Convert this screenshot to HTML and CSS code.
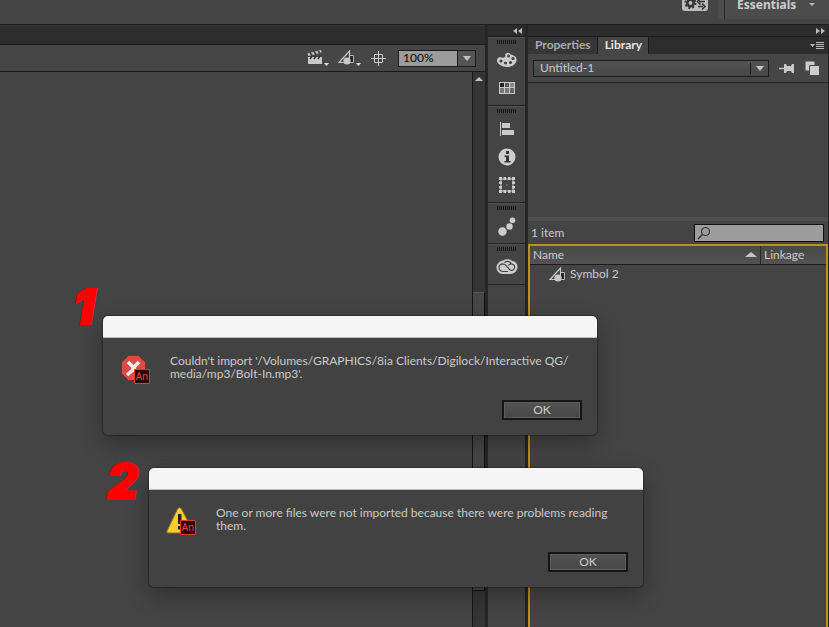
FILE: index.html
```html
<!DOCTYPE html>
<html lang="en">
<head>
<meta charset="utf-8">
<title>Animate workspace</title>
<link rel="stylesheet" href="styles.css">
</head>
<body>
<svg class="defs" aria-hidden="true">
  <symbol id="symbol-icon" viewBox="0 0 17 15">
    <path d="M9 5.500h6.500v7H9z" fill="#242424" stroke="#b8b8b8"/>
    <path d="M1 12.500L11.500 1v11.500z" fill="#444" stroke="#c8c8c8" stroke-width="1.200"/>
    <circle cx="9" cy="11" r="3.600" fill="#c8c8c8"/>
  </symbol>
</svg>
<div class="app">
  <header class="appbar">
    <button class="sync" aria-label="Sync settings">
      <svg width="26" height="16" viewBox="0 0 26 16"><circle cx="8.500" cy="8" r="3.200" fill="none" stroke="#333" stroke-width="2.600"/><circle cx="8.500" cy="8" r="5" fill="none" stroke="#333" stroke-width="2" stroke-dasharray="2 1.930"/><path d="M23 6.500h-6M18.500 3.500l-3 3 3 3M16 11.500h5M20 8.500l3 3-3 3" fill="none" stroke="#333" stroke-width="1.600"/></svg>
    </button>
    <button class="workspace">Essentials <span class="caret"></span></button>
  </header>
  <main class="workarea">
    <section class="stage">
      <div class="doc-tabs"></div>
      <div class="editbar">
        <button class="tool" aria-label="Edit scene">
          <svg width="23" height="18" viewBox="0 0 23 18"><path d="M2 9h14v6H2z" fill="#c8c8c8"/><path d="M1.500 4.500L15 1l.6 2.500L2.200 7z" fill="#c8c8c8"/><path d="M4 4l2 2M8 3l2 2M12 2l2 2" stroke="#333" stroke-width="1.700"/><path d="M2 8.500h14" stroke="#c8c8c8"/><path d="M4 10l2-3M8 10l2-3M12 10l2-3" stroke="#333" stroke-width="1.500"/><path d="M18 14h5l-2.500 3z" fill="#ddd"/></svg>
        </button>
        <button class="tool" aria-label="Edit symbols">
          <svg width="24" height="18" viewBox="0 0 24 18"><use href="#symbol-icon" y="1" width="17" height="15"/><path d="M18 14h5l-2.500 3z" fill="#ddd"/></svg>
        </button>
        <button class="tool" aria-label="Center stage">
          <svg width="15" height="15" viewBox="0 0 15 15"><path d="M3.500 3.500h8v8h-8zM7.500 0v15M0 7.500h15" fill="none" stroke="#c8c8c8"/></svg>
        </button>
        <div class="zoom"><input type="text" value="100%" aria-label="Zoom"><button aria-label="Zoom levels"><span class="arrow-down"></span></button></div>
      </div>
      <div class="canvas">
        <div class="scrollbar"><span class="scroll-up"></span><span class="thumb"></span></div>
      </div>
    </section>
    <nav class="dock" aria-label="Collapsed panels">
      <div class="dock-head">
        <svg width="9" height="6" viewBox="0 0 9 6"><path d="M4 0v6L0 3zM9 0v6L5 3z" fill="#bbb"/></svg>
      </div>
      <div class="dock-group">
        <button aria-label="Color"><svg width="20" height="16" viewBox="0 0 20 16"><path d="M9 1.500C11 0 13 1 13.500 2.500c4 .5 6.500 3 6 6-.5 4-4.500 6.500-9.500 6.500S0 12 0 8.500c0-2 1-3 3-3.200 2 .2 4 1 5-.3 1-1.500-.5-2.500 1-3.500z" fill="#cdcdcd"/><g fill="#444"><circle cx="4" cy="9" r="1.600"/><circle cx="8.500" cy="11" r="1.600"/><circle cx="13.500" cy="10.500" r="1.600"/><circle cx="16" cy="6.500" r="1.600"/><circle cx="11.500" cy="4" r="1.500"/></g></svg></button>
        <button aria-label="Swatches"><svg width="16" height="12" viewBox="0 0 16 12"><path d="M0 0h16v12H0z" fill="#c9c9c9"/><path d="M1 1h4v4H1z" fill="#222"/><path d="M6 1h4v4H6z" fill="#555"/><path d="M11 1h4v4h-4z" fill="#888"/><path d="M1 6h4v5H1zM6 6h4v5H6z" fill="#777"/><path d="M11 6h4v5h-4z" fill="#666"/></svg></button>
      </div>
      <div class="dock-group">
        <button aria-label="Align"><svg width="16" height="16" viewBox="0 0 16 16"><path d="M1.500 1v14" stroke="#c9c9c9"/><path d="M3 2h8v5H3zM3 9h12v5H3z" fill="#c9c9c9"/></svg></button>
        <button aria-label="Info"><svg width="18" height="18" viewBox="0 0 18 18"><circle cx="9" cy="9" r="8.500" fill="#cdcdcd"/><path d="M8 3h3v3H8zM6.500 7.500H11V13h1.500v1.500h-6V13H8V9H6.500z" fill="#333"/></svg></button>
        <button aria-label="Transform"><svg width="16" height="16" viewBox="0 0 16 16"><path d="M2 2h12v12H2z" fill="none" stroke="#c9c9c9"/><path d="M0 0h3v3H0zM4.500 0h2.500v3H4.500zM9 0h2.500v3H9zM13 0h3v3h-3zM0 13h3v3H0zM4.500 13h2.500v3H4.500zM9 13h2.500v3H9zM13 13h3v3h-3zM0 4.500h3V7H0zM0 9h3v2.500H0zM13 4.500h3V7h-3zM13 9h3v2.500h-3z" fill="#cdcdcd"/><path d="M3 3h10v10H3z" fill="#444"/><path d="M7.500 7.500h1v1h-1z" fill="#cdcdcd"/></svg></button>
      </div>
      <div class="dock-group">
        <button aria-label="Motion presets"><svg width="18" height="19" viewBox="0 0 18 19"><g fill="#cdcdcd"><circle cx="4.500" cy="14.500" r="4.200"/><circle cx="11.500" cy="9.500" r="3.200"/><circle cx="14.500" cy="3.300" r="2.800"/></g></svg></button>
      </div>
      <div class="dock-group">
        <button aria-label="Creative Cloud libraries"><svg width="22" height="16" viewBox="0 0 22 16"><path d="M7 1.500C10-.5 14-.2 16 2c3.500 0 5.500 3 5.500 6s-2.500 7-7 7H7c-4 0-6.500-3-6.500-6.500S3.500 2 7 1.500z" fill="#cdcdcd"/><path d="M12 12.500H7.200C2 12.500 1.500 5 6.800 4.800c2 0 3 1.200 4 2.500l3 3.500c3.500 2.500 6.500-3 3.500-5.200-2-1.300-3.800-.6-4.800.7M8.500 3.500c3-2 5.500-.5 6.800 1" fill="none" stroke="#444" stroke-width="1.200"/></svg></button>
      </div>
    </nav>
    <aside class="panel">
      <div class="panel-head"><svg width="9" height="6" viewBox="0 0 9 6"><path d="M0 0v6l4-3zM5 0v6l4-3z" fill="#bbb"/></svg></div>
      <div class="panel-tabs">
        <button>Properties</button><button class="active">Library</button>
        <svg class="menu" width="14" height="9" viewBox="0 0 14 9"><path d="M0 3h5L2.500 6z" fill="#bbb"/><path d="M6 1.500h8M6 3.500h8M6 5.500h8M6 7.500h8" stroke="#bbb"/></svg>
      </div>
      <div class="document">
        <button class="doc-select"><span>Untitled-1</span><span class="drop"><span class="arrow-down"></span></span></button>
        <button class="tool" aria-label="Pin current library"><svg width="16" height="11" viewBox="0 0 16 11"><path d="M0 5.500h7" stroke="#c9c9c9" stroke-width="1.400"/><path d="M5 1h2l1 2h4l1-2h2v9h-2l-1-2H8l-1 2H5z" fill="#c9c9c9"/></svg></button>
        <button class="tool" aria-label="New library panel"><svg width="15" height="15" viewBox="0 0 15 15"><path d="M.5.5h9v9h-9z" fill="#ccc"/><path d="M4.500 4.500h10v10h-10z" fill="#ccc" stroke="#444"/></svg></button>
      </div>
      <div class="preview"></div>
      <div class="search-row"><span>1 item</span>
        <label class="search"><svg width="14" height="14" viewBox="0 0 14 14"><circle cx="8.500" cy="5.500" r="4" fill="none" stroke="#333" stroke-width="1.200"/><path d="M5.500 8.500L1 13" stroke="#333" stroke-width="1.500"/></svg><input type="text" aria-label="Search library"></label>
      </div>
      <div class="library">
        <table>
          <thead><tr><th><span class="name-head">Name<span class="sort"></span></span></th><th class="linkage">Linkage</th></tr></thead>
          <tbody><tr><td><span class="item"><svg width="17" height="15"><use href="#symbol-icon"/></svg>Symbol 2</span></td><td></td></tr></tbody>
        </table>
      </div>
    </aside>
  </main>
</div>
<span class="step step-one">1</span>
<section class="dialog dialog-one" role="alertdialog" aria-labelledby="message-one">
  <div class="titlebar"></div>
  <div class="dialog-body">
    <svg class="alert-icon" width="32" height="32" viewBox="0 0 32 32"><path d="M9.500 1.500h10l7 7v11l-7 7h-10l-7-7v-11z" fill="#d94c44" stroke="#8f2925"/><path d="M9 8l6 6v1l-7 6M20 8l-6 6v1l6 6" fill="none" stroke="#f2e6e6" stroke-width="3.600"/><path d="M15.500 15.500h15v14h-15z" fill="#2b0000" stroke="#d9402a"/><text x="23" y="26" text-anchor="middle" class="an-text">An</text></svg>
    <p id="message-one">Couldn't import '/Volumes/GRAPHICS/8ia Clients/Digilock/Interactive QG/<br>media/mp3/Bolt-In.mp3'.</p>
  </div>
  <div class="actions"><button>OK</button></div>
</section>
<span class="step step-two">2</span>
<section class="dialog dialog-two" role="alertdialog" aria-labelledby="message-two">
  <div class="titlebar"></div>
  <div class="dialog-body">
    <svg class="alert-icon" width="32" height="32" viewBox="0 0 32 32"><path d="M12.500 3q2-3 4 0L28 25q1 2-1 2H3q-2 0-1-2z" fill="#f7cf2d" stroke="#8a7420"/><path d="M13 8h3.500v10H13zM13 20h3.500v3.500H13z" fill="#222"/><path d="M15.500 14.500h15v14h-15z" fill="#2b0000" stroke="#d9402a"/><text x="23" y="25" text-anchor="middle" class="an-text">An</text></svg>
    <p id="message-two">One or more files were not imported because there were problems reading them.</p>
  </div>
  <div class="actions"><button>OK</button></div>
</section>
</body>
</html>
```
FILE: styles.css
```css
* { box-sizing: border-box; }
html, body { height: 100%; }
body {
  margin: 0;
  background: #444;
  color: #cacaca;
  font: 12px/16px Lato, "Noto Sans", sans-serif;
  overflow: hidden;
}
button, input { font: inherit; color: inherit; padding: 0; margin: 0; border: 0; background: none; border-radius: 0; }
svg { display: block; }
.defs { position: absolute; width: 0; height: 0; }
.an-text { font: 10px "Noto Sans", sans-serif; fill: #f04a30; }
.app { display: flex; flex-direction: column; min-height: 100vh; }

.appbar { display: flex; justify-content: flex-end; align-items: flex-start; height: 24px; background: #454545; }
.sync { height: 11px; width: 26px; margin-right: 10px; display: flex; align-items: flex-end; background: #bbb; border-radius: 0 0 3px 3px; overflow: hidden; }
.workspace { width: 111px; height: 19px; padding: 0 14px 10px 13px; display: flex; align-items: center; justify-content: space-between; background: #4c4c4c; font: 700 12px/9px "Noto Sans", sans-serif; color: #ccc; border-left: 6px solid #4c4c4c; box-shadow: inset 1px 0 #292929; }
.caret { border: 3px solid transparent; border-top-color: #bbb; border-bottom: 0; }

.workarea { flex: 1; display: flex; min-height: 0; border-top: 1px solid #1d1d1d; background: #262626; gap: 3px; }
.stage { flex: 1; min-width: 0; display: flex; flex-direction: column; background: #444; }
.doc-tabs { height: 20px; background: #2d2d2d; border-bottom: 1px solid #1d1d1d; border-top: 1px solid #383838; }
.editbar { height: 27px; display: flex; align-items: center; justify-content: flex-end; gap: 9px; padding-right: 9px; border-bottom: 1px solid #1a1a1a; background: #464646; }
.zoom { display: flex; width: 78px; height: 17px; border: 1px solid #1a1a1a; margin-left: 3px; }
.zoom input { flex: 1; min-width: 0; background: #9c9c9c; color: #080808; padding-left: 4px; }
.zoom button { width: 18px; border-left: 1px solid #1a1a1a; background: #555; display: flex; align-items: center; justify-content: center; }
.arrow-down { border: 4px solid transparent; border-top: 5px solid #c4c4c4; border-bottom: 0; }
.canvas { flex: 1; display: flex; justify-content: flex-end; }
.scrollbar { width: 13px; background: #353535; border-left: 1px solid #161616; display: flex; flex-direction: column; align-items: stretch; }
.scroll-up { align-self: center; border: 4px solid transparent; border-bottom-color: #c4c4c4; border-top: 0; margin-top: 5px; margin-bottom: 211px; }
.thumb { height: 299px; background: #474747; border: 1px solid #101010; border-left: 0; border-top-color: #555; }

.dock { width: 37px; background: #444; }
.dock-head, .panel-head { height: 12px; background: #2d2d2d; border-bottom: 1px solid #1b1b1b; display: flex; align-items: center; justify-content: flex-end; }
.dock-head { padding-right: 3px; }
.dock-group { border-bottom: 1px solid #222; border-top: 1px solid #515151; padding: 2px 0 3px; display: flex; flex-direction: column; align-items: center; }
.dock-group::before { content: ""; width: 20px; height: 4px; margin-bottom: 2px; background: repeating-linear-gradient(90deg, #151515 0 1px, #444 1px 2px); }
.dock-group button { height: 28px; display: flex; align-items: center; }

.panel { width: 301px; display: flex; flex-direction: column; background: #444; border-right: 1px solid #222; }
.panel-head { padding-right: 3px; }
.panel-tabs { display: flex; height: 17px; background: #2d2d2d; font: 700 12px/16px Lato, "Noto Sans", sans-serif; }
.panel-tabs button { padding: 0 6px 2px 7px; background: #363636; color: #aaa; border-right: 1px solid #1a1a1a; }
.panel-tabs .active { background: #464646; color: #e4e4e4; }
.menu { margin: 4px 4px 0 auto; }
.document { height: 29px; display: flex; align-items: center; gap: 10px; padding: 0 8px 0 5px; border-bottom: 1px solid #222; background: #464646; }
.doc-select { flex: 1; height: 17px; display: flex; align-items: center; justify-content: space-between; padding: 0 4px 0 6px; border: 1px solid #1b1b1b; background: linear-gradient(#535353, #464646); }
.drop { display: flex; align-items: center; height: 11px; padding-left: 5px; border-left: 1px solid #1b1b1b; }
.preview { height: 138px; border-bottom: 4px solid #505050; }
.search-row { height: 23px; display: flex; align-items: center; justify-content: space-between; padding: 0 4px 0 3px; }
.search { width: 130px; height: 18px; display: flex; align-items: center; gap: 2px; padding-left: 2px; border: 1px solid #101010; background: #9c9c9c; }
.search input { flex: 1; min-width: 0; color: #111; }
.library { flex: 1; border: 2px solid #bd9016; border-bottom: 0; }
table { width: 100%; border-collapse: collapse; table-layout: fixed; }
th { height: 18px; padding: 0 3px; text-align: left; font-weight: 400; background: linear-gradient(#484848, #535353); border-bottom: 1px solid #1b1b1b; }
th.linkage { width: 66px; padding: 0 4px; box-shadow: inset 1px 0 #292929; }
.name-head { display: flex; align-items: center; justify-content: space-between; }
.sort { border: 6px solid transparent; border-bottom: 5px solid #c4c4c4; border-top: 0; }
td { height: 20px; padding: 0 3px 0 19px; }
.item { display: flex; align-items: center; gap: 4px; }

.dialog { position: absolute; width: 494px; background: #424242; border-radius: 5px; overflow: hidden; box-shadow: 0 0 1px 1px rgba(0,0,0,.3), 0 8px 22px rgba(0,0,0,.3); }
.dialog-one { left: 103px; top: 316px; }
.dialog-two { left: 149px; top: 468px; }
.titlebar { height: 22px; background: #f5f5f5; border-bottom: 1px solid #bbb; }
.dialog-body { display: flex; gap: 19px; padding: 16px 16px 0 16px; height: 62px; }
.dialog-body p { margin: 0; flex: 1; line-height: 13px; }
.actions { display: flex; justify-content: flex-end; padding: 0 15px 15px; }
.actions button { width: 80px; height: 20px; border: 2px solid #161616; background: linear-gradient(#545454, #454545); box-shadow: inset 0 0 0 1px #5c5c5c; line-height: 14px; }
.step { position: absolute; color: #f00; font: italic 900 48px/46px Inter, sans-serif; -webkit-text-stroke: 2px #f00; }
.step-one { left: 73px; top: 284px; }
.step-two { left: 107px; top: 459px; }
```
